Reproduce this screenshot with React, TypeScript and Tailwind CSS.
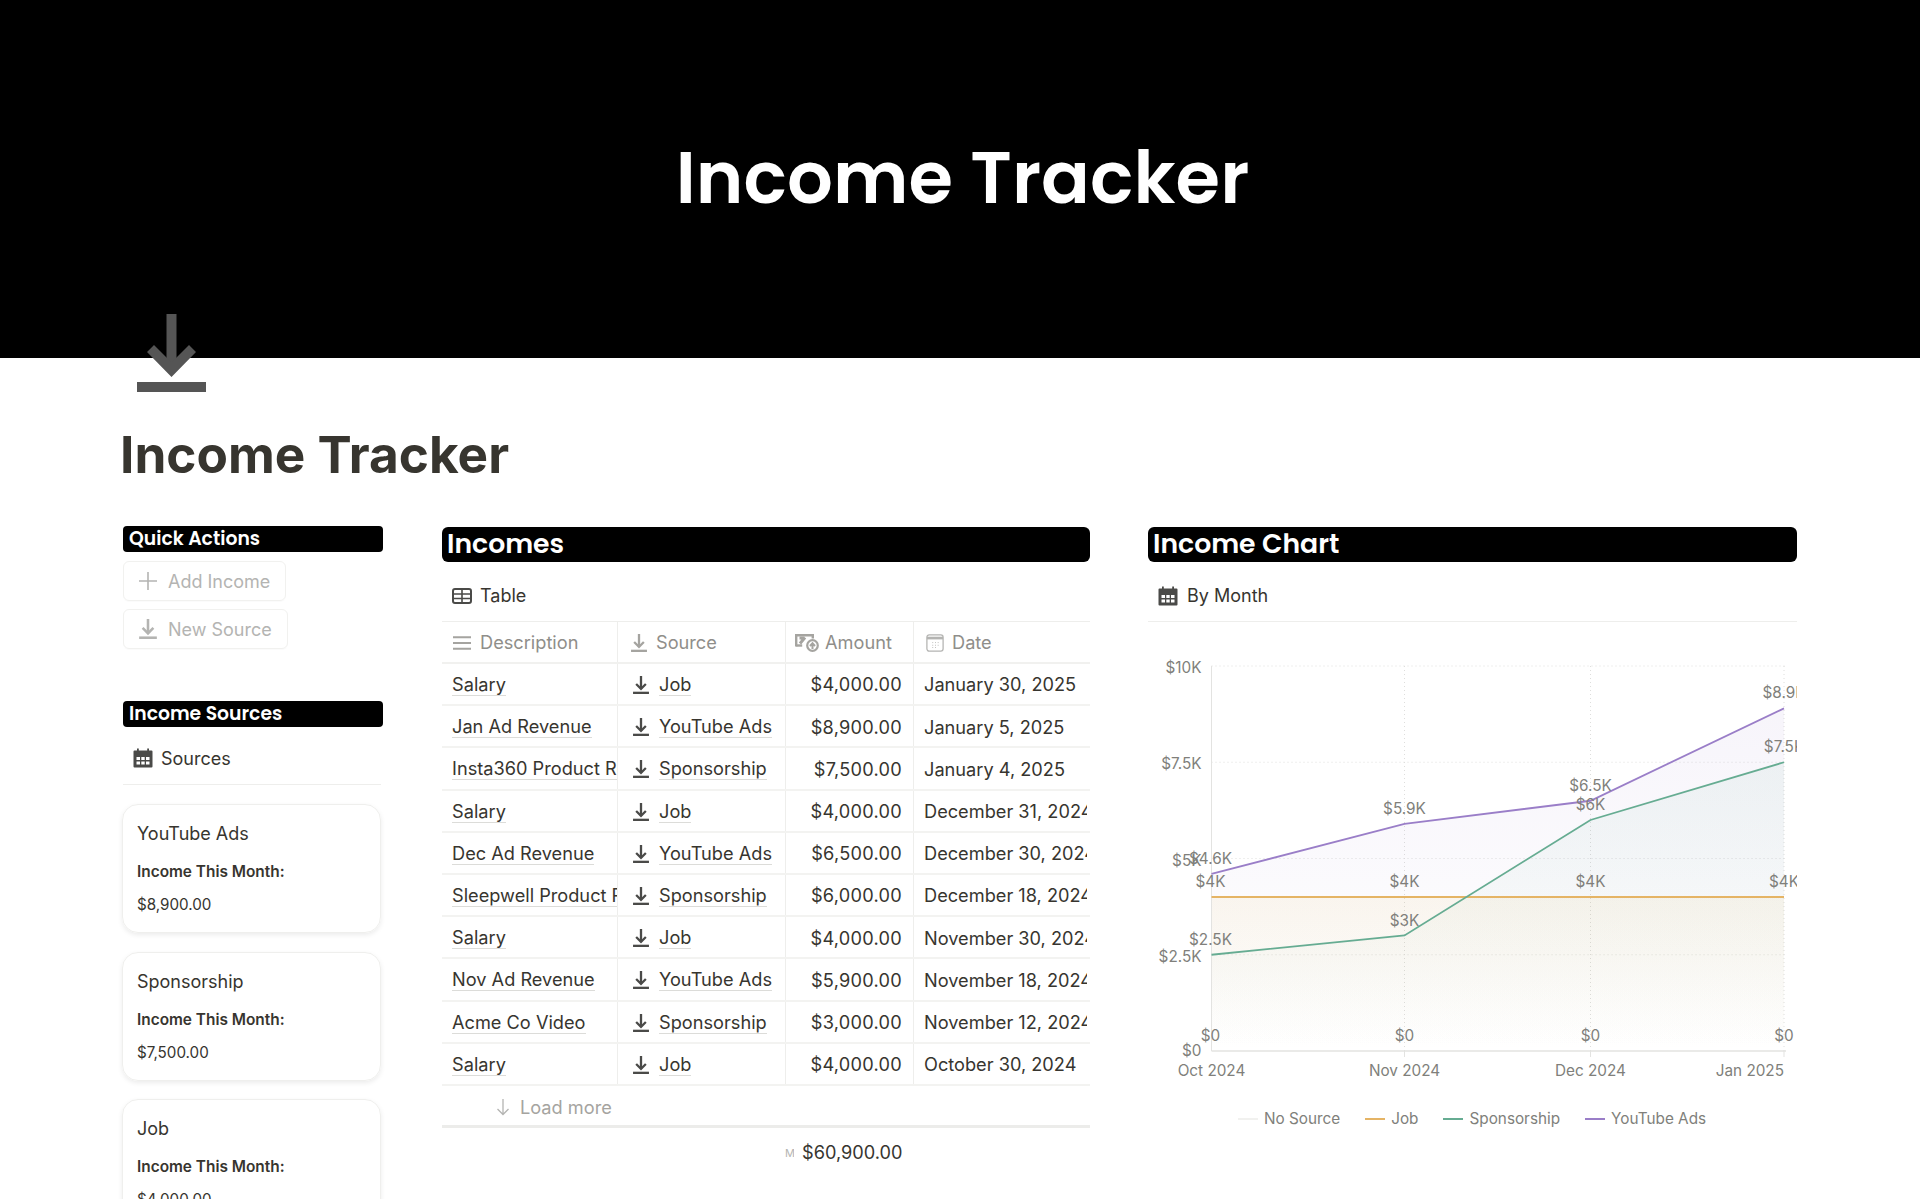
const HEAD_FONT = "font-['Poppins','Inter',sans-serif]";

function DownloadIcon({ className }: { className?: string }) {
  return (
    <svg viewBox="0 0 69 78" className={className} fill="currentColor">
      <rect x="29.500" y="0" width="10" height="55" />
      <path d="M10 38 L17 31 L34.500 48.500 L52 31 L59 38 L34.500 63 Z" />
      <rect x="0" y="68" width="69" height="10" />
    </svg>
  );
}

function SolidCalendar({ className }: { className?: string }) {
  return (
    <svg viewBox="0 0 20 20" className={className} fill="currentColor">
      <path
        fillRule="evenodd"
        d="M1.500 2.500H4V.5h1.800v2h8.400v-2H16v2h2.500a1 1 0 0 1 1 1v15a1 1 0 0 1-1 1h-17a1 1 0 0 1-1-1v-15a1 1 0 0 1 1-1ZM3.500 9v3h3.500V9H3.500Zm4.800 0v3h3.400V9H8.300Zm4.700 0v3h3.500V9H13Zm-9.500 4.500v3h3.500v-3H3.500Zm4.800 0v3h3.400v-3H8.300Zm4.700 0v3h3.500v-3H13Z"
      />
    </svg>
  );
}

function TableIcon({ className }: { className?: string }) {
  return (
    <svg viewBox="0 0 20 16" className={className} fill="none" stroke="currentColor" strokeWidth="2">
      <rect x="1" y="1" width="18" height="14" rx="2" />
      <path d="M1 6h18M1 10.500h18M10 1v14" strokeWidth="1.600" />
    </svg>
  );
}

function ListIcon({ className }: { className?: string }) {
  return (
    <svg viewBox="0 0 20 20" className={className} fill="none" stroke="currentColor" strokeWidth="2.200">
      <path d="M0 3.500h20M0 10h20M0 16.500h20" />
    </svg>
  );
}

function AmountIcon({ className }: { className?: string }) {
  return (
    <svg viewBox="0 0 24 18" className={className} fill="none" stroke="currentColor">
      <path d="M1.200 12.500V1.200h16.600v3.300" strokeWidth="2.400" />
      <path d="M1.200 11.500h6" strokeWidth="2.400" />
      <path d="M5 9.500 10 3.500 M4.500 4h5" strokeWidth="3" />
      <circle cx="17.500" cy="11.500" r="5.300" strokeWidth="2.200" />
      <path d="M17.500 15v-5M15 12l2.500-2.700L20 12" strokeWidth="2" />
    </svg>
  );
}

function DateIcon({ className }: { className?: string }) {
  return (
    <svg viewBox="0 0 20 20" className={className} fill="none" stroke="currentColor" strokeWidth="1.400">
      <rect x="1" y="1" width="18" height="18" rx="2.500" />
      <path d="M1 4.500h18" strokeWidth="3" />
      <path d="M7 9.500h1M10 9.500h1M13 9.500h1M7 12.500h1M10 12.500h1M13 12.500h1M7 15h1M10 15h1" strokeWidth="1" />
    </svg>
  );
}

function PlusIcon({ className }: { className?: string }) {
  return (
    <svg viewBox="0 0 18 18" className={className} fill="none" stroke="currentColor" strokeWidth="1.600">
      <path d="M9 0v18M0 9h18" />
    </svg>
  );
}

function ArrowDownIcon({ className }: { className?: string }) {
  return (
    <svg viewBox="0 0 14 18" className={className} fill="none" stroke="currentColor" strokeWidth="1.300">
      <path d="M7 1v15.500M1.500 11 7 16.500 12.500 11" />
    </svg>
  );
}

function SectionBar({ title, size }: { title: string; size: "sm" | "lg" }) {
  if (size === "sm") {
    return (
      <div className="bg-black rounded-[4px] h-[26px] flex items-center px-[6px]">
        <span className={`${HEAD_FONT} text-[18.800px] font-semibold text-white`}>{title}</span>
      </div>
    );
  }
  return (
    <div className="bg-black rounded-[6px] h-[35px] flex items-center px-[5px]">
      <span className={`${HEAD_FONT} text-[26.700px] font-semibold text-white`}>{title}</span>
    </div>
  );
}

function ActionButton({ icon, label }: { icon: React.ReactNode; label: string }) {
  return (
    <div className="w-fit h-[40px] flex items-center gap-[11px] pl-[15px] pr-[15px] rounded-[6px] border border-[#f1f1ef] shadow-[0_1px_1px_rgba(0,0,0,0.02)]">
      {icon}
      <span className="text-[18px] text-[#b4b4b2]">{label}</span>
    </div>
  );
}

function SourceCard({ name, amount }: { name: string; amount: string }) {
  return (
    <div className="w-[259px] h-[129px] shrink-0 rounded-[16px] border border-[#efefed] shadow-[0_2px_5px_rgba(0,0,0,0.08)] px-[14px] pt-[17px]">
      <div className="text-[18px] leading-[24px] text-[#37352f]">{name}</div>
      <div className="mt-[15px] text-[15.400px] leading-[22px] font-semibold text-[#37352f]">Income This Month:</div>
      <div className="mt-[11px] text-[15.200px] leading-[22px] text-[#37352f]">{amount}</div>
    </div>
  );
}

type IncomeRow = { desc: string; source: string; amount: string; date: string };

const rows: IncomeRow[] = [
  { desc: "Salary", source: "Job", amount: "$4,000.00", date: "January 30, 2025" },
  { desc: "Jan Ad Revenue", source: "YouTube Ads", amount: "$8,900.00", date: "January 5, 2025" },
  { desc: "Insta360 Product Review", source: "Sponsorship", amount: "$7,500.00", date: "January 4, 2025" },
  { desc: "Salary", source: "Job", amount: "$4,000.00", date: "December 31, 2024" },
  { desc: "Dec Ad Revenue", source: "YouTube Ads", amount: "$6,500.00", date: "December 30, 2024" },
  { desc: "Sleepwell Product Review", source: "Sponsorship", amount: "$6,000.00", date: "December 18, 2024" },
  { desc: "Salary", source: "Job", amount: "$4,000.00", date: "November 30, 2024" },
  { desc: "Nov Ad Revenue", source: "YouTube Ads", amount: "$5,900.00", date: "November 18, 2024" },
  { desc: "Acme Co Video", source: "Sponsorship", amount: "$3,000.00", date: "November 12, 2024" },
  { desc: "Salary", source: "Job", amount: "$4,000.00", date: "October 30, 2024" },
];

function HeaderCell({ icon, label, className }: { icon: React.ReactNode; label: string; className: string }) {
  return (
    <div className={`flex items-center h-full pt-[2px] border-r border-[#eeeeec] shrink-0 ${className}`}>
      {icon}
      <span className="text-[#8f8e8a] whitespace-nowrap">{label}</span>
    </div>
  );
}

function IncomeTable() {
  return (
    <div className="text-[18.200px] text-[#37352f]">
      <div className="flex h-[42px] border-b-2 border-[#f1f1ef]">
        <HeaderCell className="w-[176px] pl-[11px] gap-[9px]" icon={<ListIcon className="w-[18px] h-[20px] text-[#a5a4a0]" />} label="Description" />
        <HeaderCell className="w-[168px] pl-[13px] gap-[9px]" icon={<DownloadIcon className="w-[16px] h-[18px] text-[#a5a4a0]" />} label="Source" />
        <HeaderCell className="w-[128px] pl-[9px] gap-[6px]" icon={<AmountIcon className="w-[24px] h-[18px] text-[#a5a4a0]" />} label="Amount" />
        <div className="flex items-center gap-[8px] pl-[12px] pt-[2px] h-full">
          <DateIcon className="w-[18px] h-[18px] text-[#b4b4b2]" />
          <span className="text-[#8f8e8a]">Date</span>
        </div>
      </div>
      {rows.map((r, i) => (
        <div key={i} className="flex h-[42.200px] border-b-2 border-[#f3f3f1]">
          <div className="w-[176px] shrink-0 h-full pt-[2px] border-r border-[#eeeeec] pl-[10px] flex items-center overflow-hidden">
            <span className="whitespace-nowrap border-b border-[#dcdcd9] leading-[21px]">{r.desc}</span>
          </div>
          <div className="w-[168px] shrink-0 h-full pt-[2px] border-r border-[#eeeeec] pl-[15px] flex items-center gap-[10px]">
            <DownloadIcon className="w-[16px] h-[18px] text-[#4a4a48]" />
            <span className="whitespace-nowrap border-b border-[#dcdcd9] leading-[21px]">{r.source}</span>
          </div>
          <div className="w-[128px] shrink-0 h-full pt-[2px] border-r border-[#eeeeec] pr-[11px] flex items-center justify-end tracking-[0.25px]">
            {r.amount}
          </div>
          <div className="flex-1 min-w-0 mr-[3px] pl-[10px] pt-[2px] flex items-center overflow-hidden">
            <span className="whitespace-nowrap">{r.date}</span>
          </div>
        </div>
      ))}
      <div className="h-[42px] flex items-center gap-[10px] pl-[54px] pt-[4px] border-b-[3px] border-[#ececea]">
        <ArrowDownIcon className="w-[14px] h-[18px] text-[#b4b4b2]" />
        <span className="text-[#a5a4a0]">Load more</span>
      </div>
      <div className="h-[50px] flex items-center pl-[343px]">
        <span className="text-[11px] text-[#b4b4b2] w-[9px] overflow-hidden mr-[8px]">M</span>
        <span>$60,900.00</span>
      </div>
    </div>
  );
}

const OX = 1148;
const OY = 640;
const xs = [1211.5, 1404.5, 1590.5, 1784].map((x) => x - OX);
const yOf = (k: number) => 1051 - OY - k * 38.5;
const series = [
  { key: "job", color: "#e5b465", grad: "gradJob", vals: [4, 4, 4, 4], labels: ["$4K", "$4K", "$4K", "$4K"] },
  { key: "spon", color: "#66ac92", grad: "gradSpon", vals: [2.5, 3, 6, 7.5], labels: ["$2.5K", "$3K", "$6K", "$7.5K"] },
  { key: "yt", color: "#9a7ec8", grad: "gradYt", vals: [4.6, 5.9, 6.5, 8.9], labels: ["$4.6K", "$5.9K", "$6.5K", "$8.9K"] },
];
const yTicks = [
  { label: "$10K", v: 10 },
  { label: "$7.5K", v: 7.5 },
  { label: "$5K", v: 5 },
  { label: "$2.5K", v: 2.5 },
  { label: "$0", v: 0 },
];
const months = ["Oct 2024", "Nov 2024", "Dec 2024", "Jan 2025"];
const TEXT_GRAY = "#807f7b";

function IncomeChart() {
  const base = yOf(0);
  return (
    <svg width="649" height="448" viewBox="0 0 649 448" className="block" fontFamily="Inter, sans-serif" fontSize="15.3">
      <defs>
        <linearGradient id="gradYt" x1="0" y1={yOf(8.9)} x2="0" y2={base} gradientUnits="userSpaceOnUse">
          <stop offset="0" stopColor="#9a7ec8" stopOpacity="0.08" />
          <stop offset="1" stopColor="#9a7ec8" stopOpacity="0" />
        </linearGradient>
        <linearGradient id="gradSpon" x1="0" y1={yOf(7.5)} x2="0" y2={base} gradientUnits="userSpaceOnUse">
          <stop offset="0" stopColor="#66ac92" stopOpacity="0.08" />
          <stop offset="1" stopColor="#66ac92" stopOpacity="0" />
        </linearGradient>
        <linearGradient id="gradJob" x1="0" y1={yOf(4)} x2="0" y2={base} gradientUnits="userSpaceOnUse">
          <stop offset="0" stopColor="#e5bb55" stopOpacity="0.09" />
          <stop offset="1" stopColor="#e5bb55" stopOpacity="0" />
        </linearGradient>
      </defs>

      {yTicks.slice(0, 4).map((t) => (
        <line key={t.v} x1={xs[0]} x2={xs[3] + 2} y1={yOf(t.v)} y2={yOf(t.v)} stroke="#dededc" strokeDasharray="1 3" />
      ))}
      {xs.slice(1).map((x) => (
        <line key={x} x1={x} x2={x} y1={yOf(10)} y2={base} stroke="#dededc" strokeDasharray="1 3" />
      ))}

      {series
        .slice()
        .reverse()
        .map((s) => (
          <path
            key={s.key}
            d={`M${xs[0]} ${base} ${s.vals.map((v, i) => `L${xs[i]} ${yOf(v)}`).join(" ")} L${xs[3]} ${base} Z`}
            fill={`url(#${s.grad})`}
          />
        ))}

      <line x1={xs[0]} x2={xs[0]} y1={yOf(10)} y2={base} stroke="#e3e3e1" />
      <line x1={xs[0]} x2={xs[3] + 2} y1={base} y2={base} stroke="#e3e3e1" strokeWidth="1.500" />
      {xs.slice(1).map((x) => (
        <line key={x} x1={x} x2={x} y1={base} y2={base + 6} stroke="#e3e3e1" />
      ))}

      {series.map((s) => (
        <polyline
          key={s.key}
          points={s.vals.map((v, i) => `${xs[i]},${yOf(v)}`).join(" ")}
          fill="none"
          stroke={s.color}
          strokeWidth="1.800"
        />
      ))}

      {yTicks.map((t) => (
        <text key={t.v} x={xs[0] - 10} y={yOf(t.v) + (t.v === 0 ? 5 : 7)} textAnchor="end" fill={TEXT_GRAY}>
          {t.label}
        </text>
      ))}
      {series.map((s) =>
        s.labels.map((l, i) => (
          <text key={s.key + i} x={xs[i] - (i === 0 ? 1 : 0)} y={yOf(s.vals[i]) - 10} textAnchor="middle" fill={TEXT_GRAY}>
            {l}
          </text>
        ))
      )}
      {xs.map((x, i) => (
        <text key={x} x={x - (i === 0 ? 1 : 0)} y={base - 10} textAnchor="middle" fill={TEXT_GRAY}>
          $0
        </text>
      ))}
      {months.map((m, i) => (
        <text
          key={m}
          x={i === 3 ? xs[3] : xs[i]}
          y={base + 25}
          textAnchor={i === 3 ? "end" : "middle"}
          fill={TEXT_GRAY}
        >
          {m}
        </text>
      ))}
    </svg>
  );
}

function LegendItem({ color, label }: { color: string; label: string }) {
  return (
    <div className="flex items-center gap-[6px]">
      <div className="w-[20px] h-[2px]" style={{ backgroundColor: color }} />
      <span className="text-[15.300px] text-[#807f7b]">{label}</span>
    </div>
  );
}

export default function App() {
  return (
    <div className="h-[1199px] w-[1920px] overflow-hidden bg-white font-['Inter',sans-serif] text-[#37352f]">
      <div className="h-[358px] bg-black flex items-center justify-center pb-[3px] pl-[5px]">
        <h1 className={`${HEAD_FONT} text-[72px] font-semibold text-white tracking-[0.1px]`}>Income Tracker</h1>
      </div>

      <div className="px-[122px]">
        <DownloadIcon className="block relative -mt-[44px] ml-[15px] w-[69px] h-[78px] text-[#555555]" />
        <div className="mt-[32px] -ml-[2px] text-[51.300px] leading-[60px] font-bold text-[#37352f]">Income Tracker</div>

        <div className="mt-[42px] flex items-start">
          <div className="w-[260px] ml-[1px] shrink-0 flex flex-col">
            <SectionBar title="Quick Actions" size="sm" />
            <div className="mt-[9px] flex flex-col gap-[8px]">
              <ActionButton icon={<PlusIcon className="w-[18px] h-[18px] text-[#b4b4b2]" />} label="Add Income" />
              <ActionButton icon={<DownloadIcon className="w-[18px] h-[20px] text-[#b4b4b2]" />} label="New Source" />
            </div>
            <div className="mt-[52px]">
              <SectionBar title="Income Sources" size="sm" />
            </div>
            <div className="h-[58px] flex items-center gap-[8px] pl-[10px] pt-[5px] border-b border-[#eeeeec] w-[258px]">
              <SolidCalendar className="w-[20px] h-[20px] text-[#4a4a48]" />
              <span className="text-[18px]">Sources</span>
            </div>
            <div className="mt-[19px] -ml-[1px] flex flex-col gap-[18.500px]">
              <SourceCard name="YouTube Ads" amount="$8,900.00" />
              <SourceCard name="Sponsorship" amount="$7,500.00" />
              <SourceCard name="Job" amount="$4,000.00" />
            </div>
          </div>

          <div className="w-[648px] mt-[1px] ml-[59px] shrink-0">
            <SectionBar title="Incomes" size="lg" />
            <div className="h-[60px] flex items-center gap-[8px] pl-[10px] pt-[8px] border-b border-[#eeeeec]">
              <TableIcon className="w-[20px] h-[16px] text-[#4a4a48]" />
              <span className="text-[18px]">Table</span>
            </div>
            <IncomeTable />
          </div>

          <div className="w-[649px] mt-[1px] ml-[58px] shrink-0">
            <SectionBar title="Income Chart" size="lg" />
            <div className="h-[60px] flex items-center gap-[9px] pl-[10px] pt-[8px] border-b border-[#eeeeec]">
              <SolidCalendar className="w-[20px] h-[20px] text-[#4a4a48]" />
              <span className="text-[18px]">By Month</span>
            </div>
            <div className="mt-[18px] overflow-hidden">
              <IncomeChart />
            </div>
            <div className="mt-[19px] h-[24px] flex items-center gap-[25px] pl-[90px]">
              <LegendItem color="#f1f1ef" label="No Source" />
              <LegendItem color="#e5b465" label="Job" />
              <LegendItem color="#66ac92" label="Sponsorship" />
              <LegendItem color="#9a7ec8" label="YouTube Ads" />
            </div>
          </div>
        </div>
      </div>
    </div>
  );
}
